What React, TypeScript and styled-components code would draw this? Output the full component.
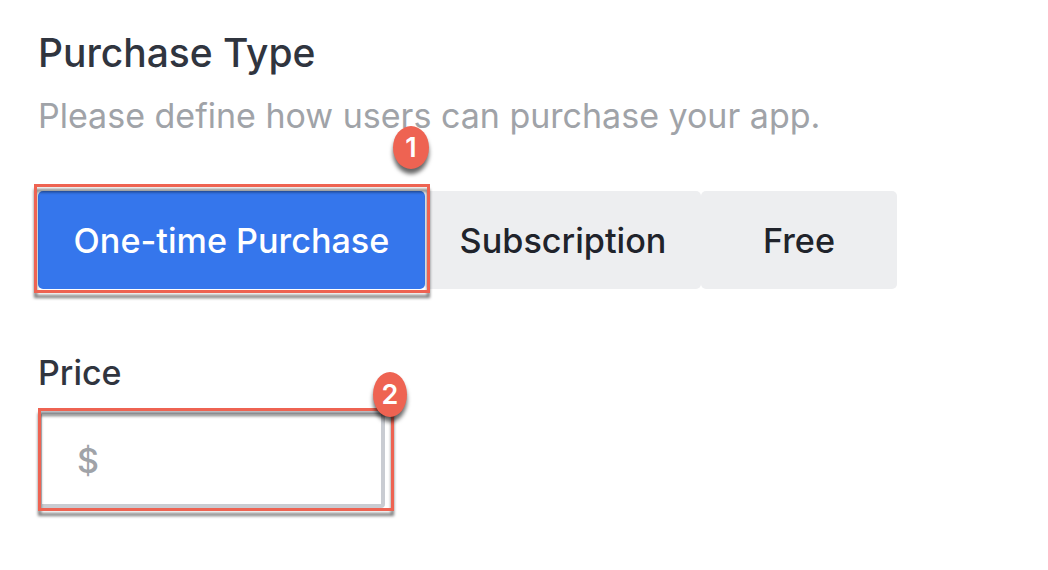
import React from "react";
import styled, { createGlobalStyle } from "styled-components";

const GlobalStyle = createGlobalStyle`
  * { box-sizing: border-box; }
  body {
    margin: 0;
    background: #ffffff;
    font-family: Inter, "Liberation Sans", sans-serif;
    overflow: hidden;
  }
`;

const Form = styled.main`
  display: flex;
  flex-direction: column;
  align-items: flex-start;
  gap: 53px;
  width: 1048px;
  height: 570px;
  padding: 29px 38px 0;
  background: #ffffff;
`;

const Header = styled.header`
  display: flex;
  flex-direction: column;
  gap: 17px;
`;

const Title = styled.h1`
  margin: 0;
  font-size: 39px;
  line-height: 48px;
  font-weight: 500;
  letter-spacing: -0.03px;
  color: #30353f;
  white-space: nowrap;
`;

const Description = styled.p`
  margin: 0;
  font-size: 34px;
  line-height: 44px;
  color: #a0a3a8;
  white-space: nowrap;
`;

const Options = styled.div`
  display: flex;
  position: relative;
`;

const Option = styled.button<{ $width: number; $active?: boolean }>`
  width: ${(p) => p.$width}px;
  height: 98px;
  padding: 1px 0 0;
  border: 0;
  border-radius: 5px;
  background: ${(p) => (p.$active ? "#3576ec" : "#edeef0")};
  color: ${(p) => (p.$active ? "#ffffff" : "#20232b")};
  font-family: inherit;
  font-size: 34.2px;
  line-height: 44px;
  font-weight: 500;
  white-space: nowrap;
`;

const PriceGroup = styled.div`
  display: flex;
  flex-direction: column;
  gap: 15px;
  padding-top: 9px;
`;

const Label = styled.label`
  font-size: 34px;
  line-height: 44px;
  font-weight: 500;
  color: #30353f;
`;

const Field = styled.div`
  position: relative;
  display: flex;
  align-items: center;
  width: 347px;
  height: 98px;
  padding: 3px 0 0 35px;
  border: 4px solid #c9ccd2;
  border-radius: 4px;
  font-size: 34px;
  line-height: 44px;
  font-weight: 500;
  color: #a0a3a8;
`;

const Highlight = styled.div<{ $inset: string }>`
  position: absolute;
  inset: ${(p) => p.$inset};
  border: 3px solid #ee6352;
  filter: drop-shadow(0 5px 1.5px rgba(0, 0, 0, 0.52));
  pointer-events: none;
`;

const Badge = styled.span<{ $inset: string; $w: number; $h: number }>`
  position: absolute;
  inset: ${(p) => p.$inset};
  display: flex;
  align-items: center;
  justify-content: center;
  width: ${(p) => p.$w}px;
  height: ${(p) => p.$h}px;
  border-radius: 50%;
  background: #ee6352;
  color: #ffffff;
  font-size: 27px;
  line-height: 28px;
  font-weight: 600;
  box-shadow: 0 5px 4px rgba(0, 0, 0, 0.6);
`;

export default function App() {
  return (
    <>
      <GlobalStyle />
      <Form>
        <Header>
          <Title>Purchase Type</Title>
          <Description>Please define how users can purchase your app.</Description>
        </Header>
        <Options>
          <Option $width={387} $active>One-time Purchase</Option>
          <Option $width={276}>Subscription</Option>
          <Option $width={196}>Free</Option>
          <Highlight $inset="-7px 467px -4px -4px" />
          <Badge $inset="-65px auto auto 355px" $w={36} $h={43}>1</Badge>
        </Options>
        <PriceGroup>
          <Label>Price</Label>
          <Field>
            $
            <Highlight $inset="-6px -13px -7px -4px" />
            <Badge $inset="-42px auto auto 331px" $w={34} $h={45}>2</Badge>
          </Field>
        </PriceGroup>
      </Form>
    </>
  );
}
